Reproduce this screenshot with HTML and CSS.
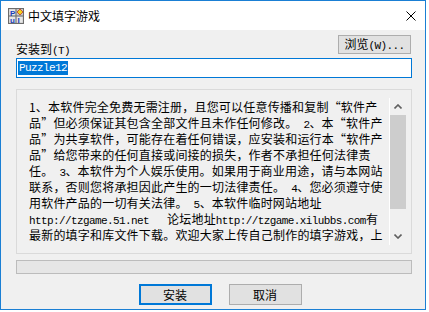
FILE: index.html
```html
<!DOCTYPE html>
<html lang="zh-CN">
  <head>
    <meta charset="UTF-8" />
    <title>中文填字游戏</title>
    <link rel="stylesheet" href="styles.css">
  </head>
  <body>
    <div class="window">
      <div class="titlebar">
        <svg class="app-icon" width="16" height="16" viewBox="0 0 16 16">
          <rect x="0.5" y="0.5" width="15" height="15" fill="#c8c8c8" stroke="#6c6c6c" />
          <rect x="1.5" y="1.5" width="6" height="6" fill="#e8e8e8" />
          <rect x="8.5" y="8.5" width="6" height="6" fill="#e8e8e8" />
          <rect x="1.5" y="8.5" width="6" height="6" fill="#e8e8e8" />
          <path d="M8 0V16M0 8H16" stroke="#6c6c6c" />
          <text x="2" y="7.5" font-size="8" font-family="Liberation Sans" font-weight="bold" fill="#1c3fb8">P</text>
          <text x="2" y="15" font-size="8" font-family="Liberation Sans" font-weight="bold" fill="#1c3fb8">u</text>
          <text x="9.5" y="15" font-size="8" font-family="Liberation Sans" font-weight="bold" fill="#1c3fb8">I</text>
          <path d="M12 1L15 4L12 7L9 4Z" fill="#f2d21b" stroke="#c0392b" stroke-width="0.8" />
        </svg>
        <span class="title">中文填字游戏</span>
        <svg class="close" width="10" height="10" viewBox="0 0 10 10">
          <path d="M0.5 0.5L9.5 9.5M9.5 0.5L0.5 9.5" stroke="#000" stroke-width="1" />
        </svg>
      </div>

      <div class="dialog">
        <div class="path-row">
          <label class="path-label" for="path">安装到<span class="en">(T)</span></label>
          <button class="btn browse">浏览<span class="en">(W)...</span></button>
        </div>
        <div class="path-input" id="path"><span class="selected en">Puzzle12</span></div>

        <div class="license">
          <div class="license-text">
            1、本软件完全免费无需注册，且您可以任意传播和复制“软件产<br />
            品”但必须保证其包含全部文件且未作任何修改。<span class="en"> 2</span>、本“软件产<br />
            品”为共享软件，可能存在着任何错误，应安装和运行本“软件产<br />
            品”给您带来的任何直接或间接的损失，作者不承担任何法律责<br />
            任。<span class="en"> 3</span>、本软件为个人娱乐使用。如果用于商业用途，请与本网站<br />
            联系，否则您将承担因此产生的一切法律责任。<span class="en"> 4</span>、您必须遵守使<br />
            用软件产品的一切有关法律。<span class="en"> 5</span>、本软件临时网站地址<br />
            <span class="en">http://tzgame.51.net   </span>论坛地址<span class="en">http://tzgame.xilubbs.com</span>有<br />
            最新的填字和库文件下载。欢迎大家上传自己制作的填字游戏，上<br />
            传您的作品将为更多的填字爱好者带来乐趣，谢谢您的支持！
          </div>
          <div class="scrollbar">
            <div class="arrow">
              <svg width="8" height="5" viewBox="0 0 8 5"><path d="M0.5 4.5L4 1L7.5 4.5" fill="none" stroke="#606060" stroke-width="1.6" /></svg>
            </div>
            <div class="thumb"></div>
            <div class="track"></div>
            <div class="arrow">
              <svg width="8" height="5" viewBox="0 0 8 5"><path d="M0.5 0.5L4 4L7.5 0.5" fill="none" stroke="#606060" stroke-width="1.6" /></svg>
            </div>
          </div>
        </div>

        <div class="progress"></div>

        <div class="actions">
          <button class="btn default">安装</button>
          <button class="btn">取消</button>
        </div>
      </div>
    </div>
  </body>
</html>
```

FILE: styles.css
```css
body {
  margin: 0;
  background: #ffffff;
  font-family: "Noto Sans CJK SC", sans-serif;
  font-size: 12px;
  color: #000;
}
.window {
  width: 424px;
  height: 308px;
  border: 1px solid #1a7fd4;
  display: flex;
  flex-direction: column;
  background: #f0f0f0;
}
.titlebar {
  height: 29px;
  background: #ffffff;
  display: flex;
  align-items: center;
}
.app-icon {
  margin-left: 7px;
  margin-top: 1px;
}
.title {
  margin-left: 4px;
  line-height: 14px;
  flex: 1;
}
.close {
  margin-right: 9px;
  margin-top: 1px;
}
.dialog {
  flex: 1;
  padding: 5px 13px 0 15px;
  display: flex;
  flex-direction: column;
}
.en {
  font-family: "Liberation Mono", monospace;
  font-size: 11px;
  line-height: 11px;
  letter-spacing: -0.6px;
  white-space: pre;
}
.path-row {
  height: 22px;
  display: flex;
  justify-content: space-between;
}
.path-label {
  align-self: flex-end;
  line-height: 14px;
}
.btn {
  font-family: "Noto Sans CJK SC", sans-serif;
  font-size: 12px;
  color: #000;
  background: #e1e1e1;
  border: 1px solid #adadad;
  width: 73px;
  height: 21px;
  padding: 0;
  line-height: 14px;
}
.browse {
  height: 19px;
  margin-right: 1px;
}
.path-input {
  margin-top: 1px;
  height: 18px;
  background: #ffffff;
  border: 1px solid #0078d7;
  display: flex;
  align-items: center;
  padding-left: 1px;
}
.selected {
  background: #0078d7;
  color: #ffffff;
  height: 14px;
  line-height: 14px;
  padding: 0 1px;
}
.license {
  margin-top: 11px;
  border: 1px solid #dadada;
  padding: 8px 5px 8px 12px;
  display: flex;
  align-items: flex-start;
}
.license-text {
  flex: 1;
  height: 146px;
  padding-top: 1px;
  overflow: hidden;
  line-height: 16px;
  white-space: nowrap;
  letter-spacing: 0.2px;
}
.scrollbar {
  width: 16px;
  height: 147px;
  border-left: 1px solid #ffffff;
  display: flex;
  flex-direction: column;
}
.arrow {
  height: 17px;
  display: flex;
  align-items: center;
  justify-content: center;
}
.thumb {
  height: 94px;
  background: #cdcdcd;
}
.track {
  flex: 1;
}
.progress {
  margin-top: 6px;
  height: 12px;
  border: 1px solid #bcbcbc;
  background: #e6e6e6;
}
.actions {
  margin-top: 10px;
  padding-left: 12px;
  display: flex;
  justify-content: center;
  gap: 17px;
}
.default {
  border: 2px solid #0078d7;
}
```
